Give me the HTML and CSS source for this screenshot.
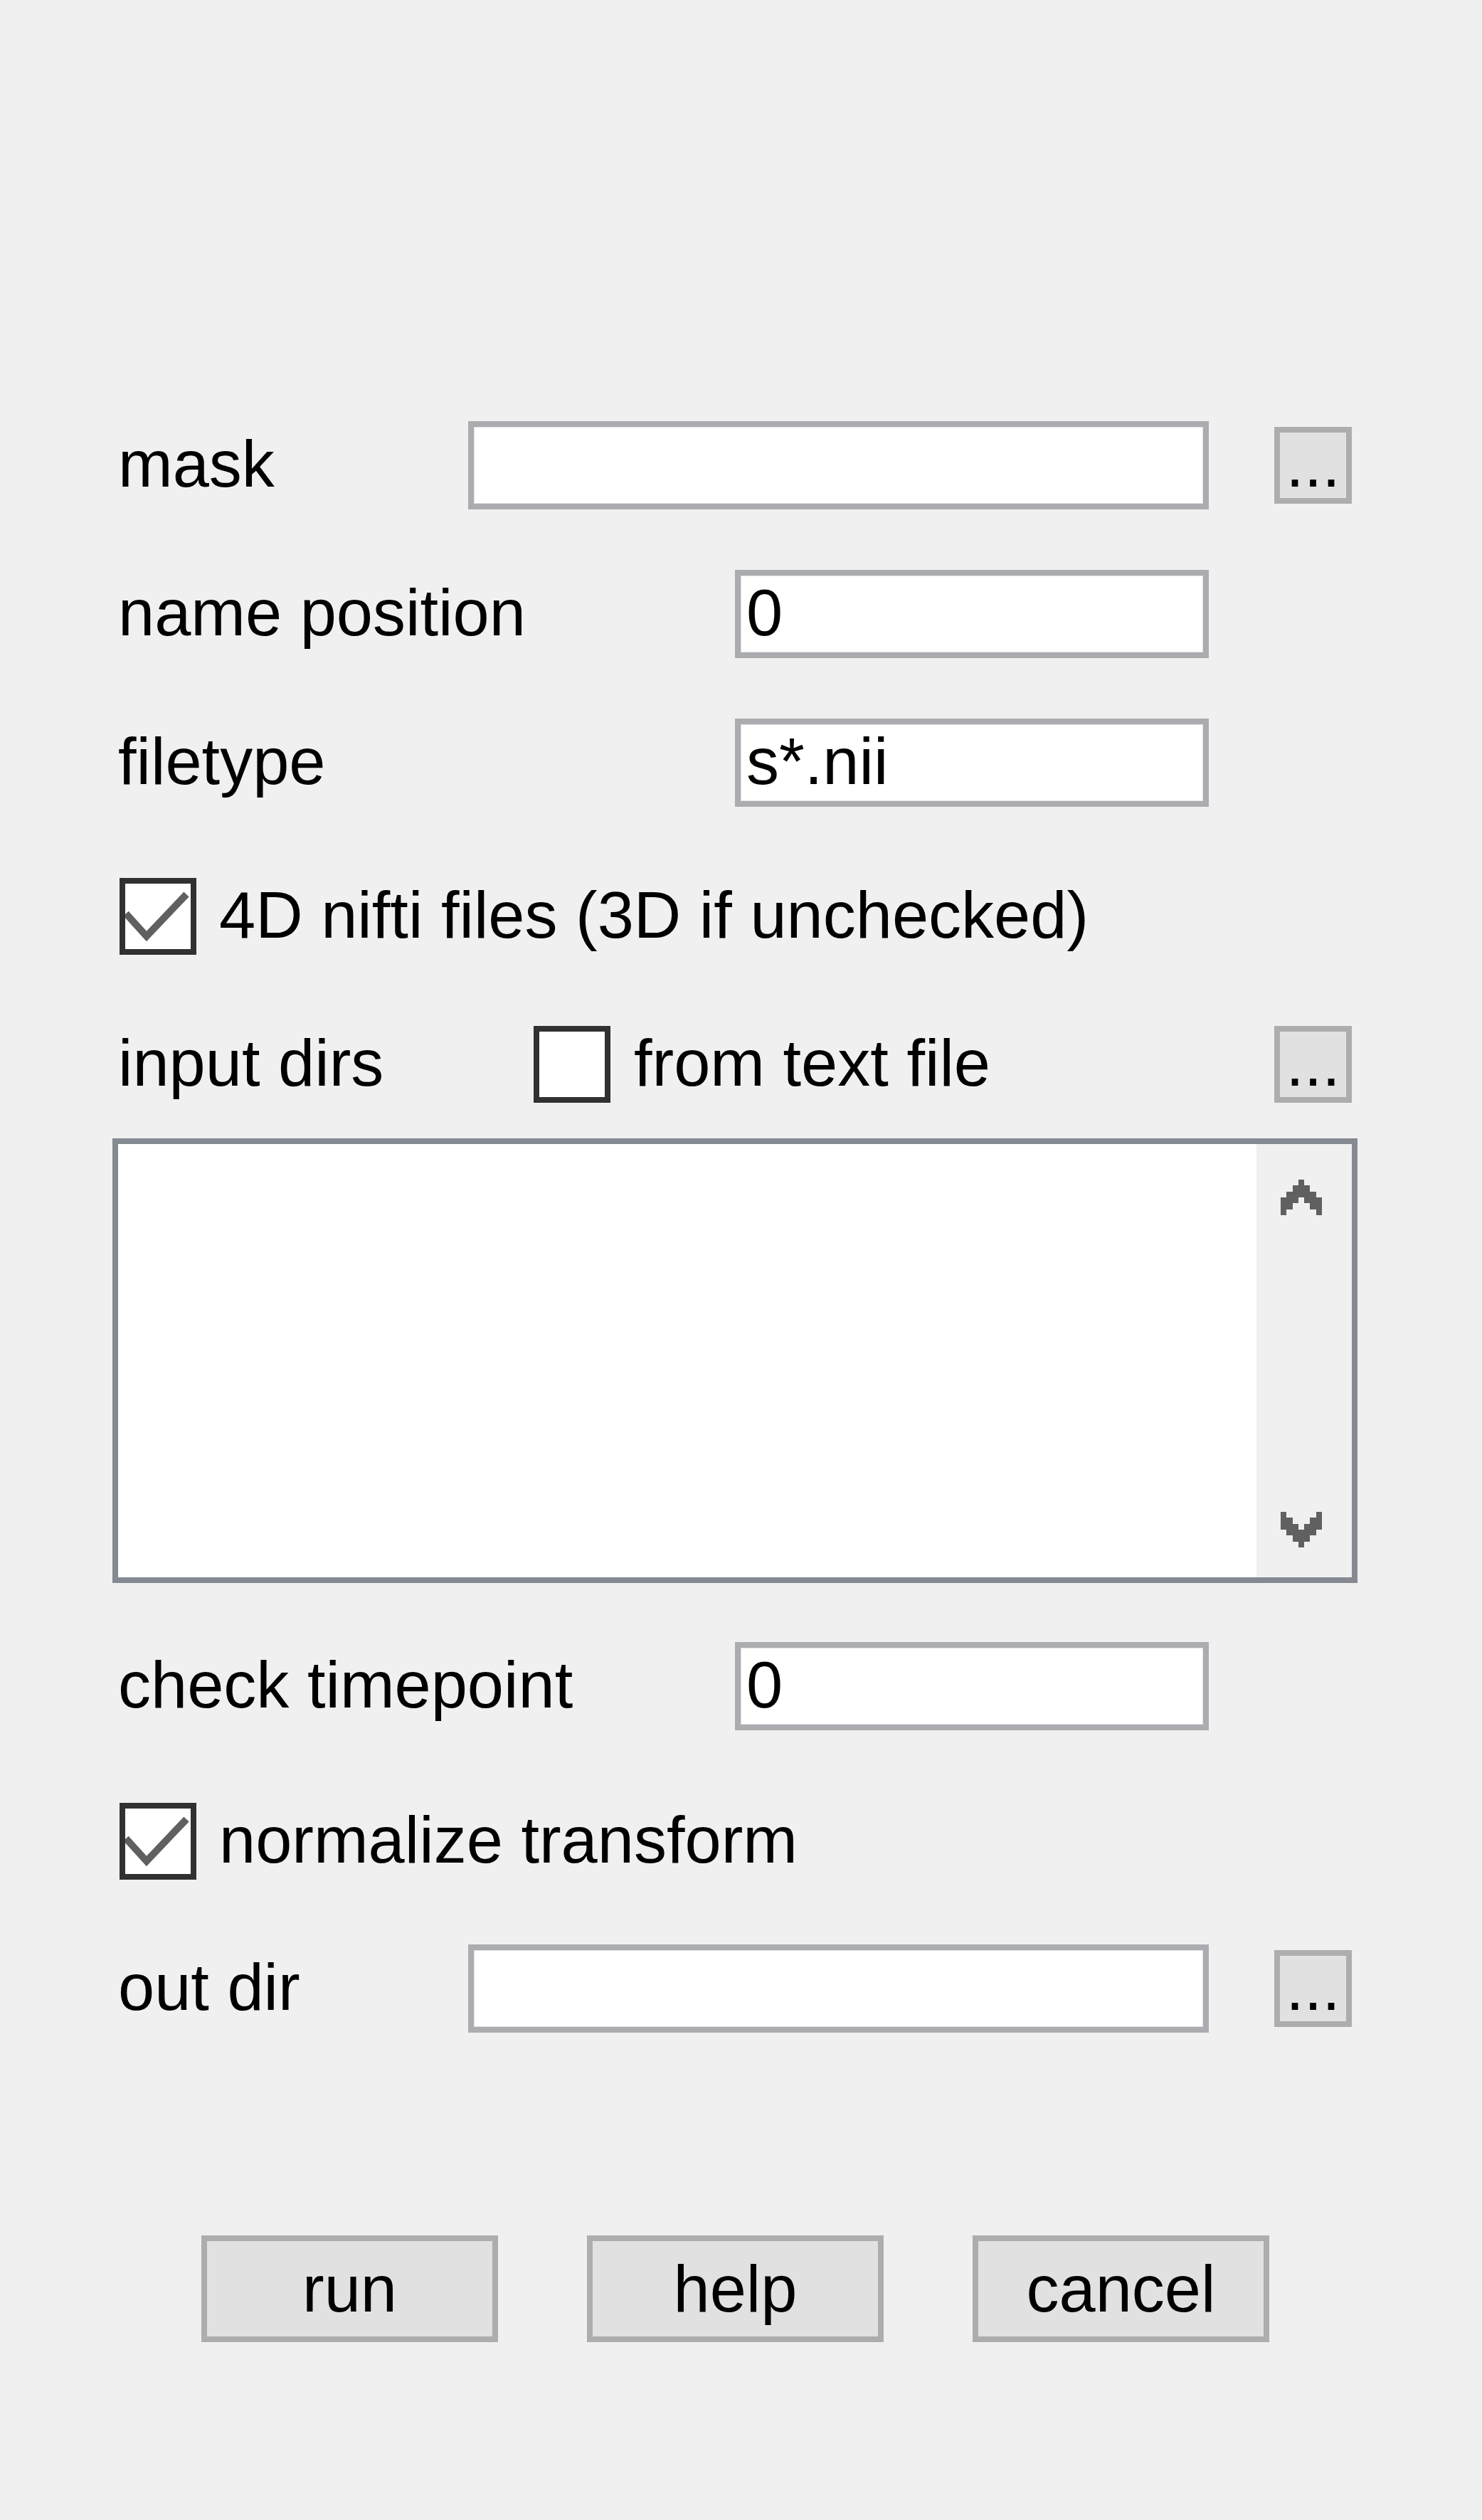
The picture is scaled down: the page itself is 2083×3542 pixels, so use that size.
FILE: index.html
```html
<!DOCTYPE html>
<html>
<head>
<meta charset="utf-8">
<title>dialog</title>
<link rel="stylesheet" href="styles.css">
</head>
<body>
<div class="dialog">
  <div class="row r1">
    <span class="label w-short">mask</span>
    <div class="field wide"></div>
    <div class="browse">...</div>
  </div>
  <div class="row r2">
    <span class="label w-long">name position</span>
    <div class="field narrow">0</div>
  </div>
  <div class="row r3">
    <span class="label w-long">filetype</span>
    <div class="field narrow">s*.nii</div>
  </div>
  <div class="row r4">
    <span class="check first">
      <svg class="tick" viewBox="0 0 92 92" width="92" height="92"><polyline points="1,42 30,74 86,15" fill="none" stroke="#606060" stroke-width="10"/></svg>
    </span>
    <span class="check-text">4D nifti files (3D if unchecked)</span>
  </div>
  <div class="row r5">
    <span class="label w-mid">input dirs</span>
    <span class="check"></span>
    <span class="check-text gap2">from text file</span>
    <div class="browse push">...</div>
  </div>
  <div class="listbox">
    <div class="list-area"></div>
    <div class="scrollbar">
      <svg class="arrow" viewBox="0 0 7 6" width="58" height="50" shape-rendering="crispEdges">
        <rect x="3" y="0" width="1" height="1"/>
        <rect x="2" y="1" width="3" height="1"/>
        <rect x="1" y="2" width="5" height="1"/>
        <rect x="0" y="3" width="3" height="1"/>
        <rect x="4" y="3" width="3" height="1"/>
        <rect x="0" y="4" width="2" height="1"/>
        <rect x="5" y="4" width="2" height="1"/>
        <rect x="0" y="5" width="1" height="1"/>
        <rect x="6" y="5" width="1" height="1"/>
      </svg>
      <svg class="arrow" viewBox="0 0 7 6" width="58" height="50" shape-rendering="crispEdges">
        <rect x="0" y="0" width="1" height="1"/>
        <rect x="6" y="0" width="1" height="1"/>
        <rect x="0" y="1" width="2" height="1"/>
        <rect x="5" y="1" width="2" height="1"/>
        <rect x="0" y="2" width="3" height="1"/>
        <rect x="4" y="2" width="3" height="1"/>
        <rect x="1" y="3" width="5" height="1"/>
        <rect x="2" y="4" width="3" height="1"/>
        <rect x="3" y="5" width="1" height="1"/>
      </svg>
    </div>
  </div>
  <div class="row r6">
    <span class="label w-long">check timepoint</span>
    <div class="field narrow">0</div>
  </div>
  <div class="row r7">
    <span class="check first">
      <svg class="tick" viewBox="0 0 92 92" width="92" height="92"><polyline points="1,42 30,74 86,15" fill="none" stroke="#606060" stroke-width="10"/></svg>
    </span>
    <span class="check-text">normalize transform</span>
  </div>
  <div class="row r8">
    <span class="label w-short">out dir</span>
    <div class="field wide"></div>
    <div class="browse">...</div>
  </div>
  <div class="actions">
    <div class="btn">run</div>
    <div class="btn">help</div>
    <div class="btn">cancel</div>
  </div>
</div>
</body>
</html>
```
FILE: styles.css
```css
* { box-sizing: border-box; }
html, body {
  margin: 0;
  padding: 0;
  background: #f0f0f0;
}
body {
  font-family: "Liberation Sans", Arial, sans-serif;
  font-size: 92px;
  color: #000;
  min-height: 3542px;
}
.dialog {
  width: 1908px;
  padding-left: 158px;
  padding-top: 592px;
}
.row {
  display: flex;
  align-items: center;
  height: 124px;
  width: 1750px;
  padding-right: 8px;
}
.r2, .r3 { margin-top: 85px; }
.r4 { margin-top: 92px; }
.r5 { margin-top: 84px; }
.r6 { margin-top: 83px; }
.r7 { margin-top: 94px; }
.r8 { margin-top: 83px; }

.label {
  display: block;
  padding-left: 8px;
  padding-bottom: 4px;
  line-height: 1;
  white-space: nowrap;
  flex: none;
}
.w-short { width: 500px; }
.w-mid { width: 592px; }
.w-long { width: 875px; }

.field {
  height: 124px;
  background: #fff;
  border: 8px solid #abacb0;
  box-shadow: inset 0 0 0 1px #e2e2e4;
  display: flex;
  align-items: center;
  padding-left: 8px;
  padding-bottom: 4px;
  line-height: 1;
  flex: none;
}
.wide { width: 1041px; }
.narrow { width: 666px; }

.browse {
  width: 109px;
  height: 108px;
  margin-left: 92px;
  background: #e1e1e1;
  border: 8px solid #adadad;
  text-align: center;
  line-height: 89px;
  flex: none;
  overflow: hidden;
}
.browse.push { margin-left: auto; }

.check {
  width: 108px;
  height: 108px;
  border: 8px solid #313131;
  background: #fff;
  flex: none;
}
.check.first { margin-left: 10px; }
.tick { display: block; }

.check-text {
  display: block;
  margin-left: 32px;
  padding-bottom: 4px;
  line-height: 1;
  white-space: nowrap;
}
.check-text.gap2 { margin-left: 33px; }

.listbox {
  margin-top: 42px;
  width: 1750px;
  height: 625px;
  border: 8px solid #858992;
  display: flex;
}
.list-area {
  flex: 1;
  background: #fff;
}
.scrollbar {
  width: 134px;
  background: #f0f0f0;
  display: flex;
  flex-direction: column;
  justify-content: space-between;
  align-items: flex-start;
  padding: 50px 0 42px 34px;
}
.arrow { display: block; fill: #606060; }

.actions {
  margin-top: 285px;
  display: flex;
  gap: 125px;
  padding-left: 125px;
}
.btn {
  width: 417px;
  height: 150px;
  background: #e1e1e1;
  border: 8px solid #adadad;
  display: flex;
  align-items: center;
  justify-content: center;
  line-height: 1;
}
```
